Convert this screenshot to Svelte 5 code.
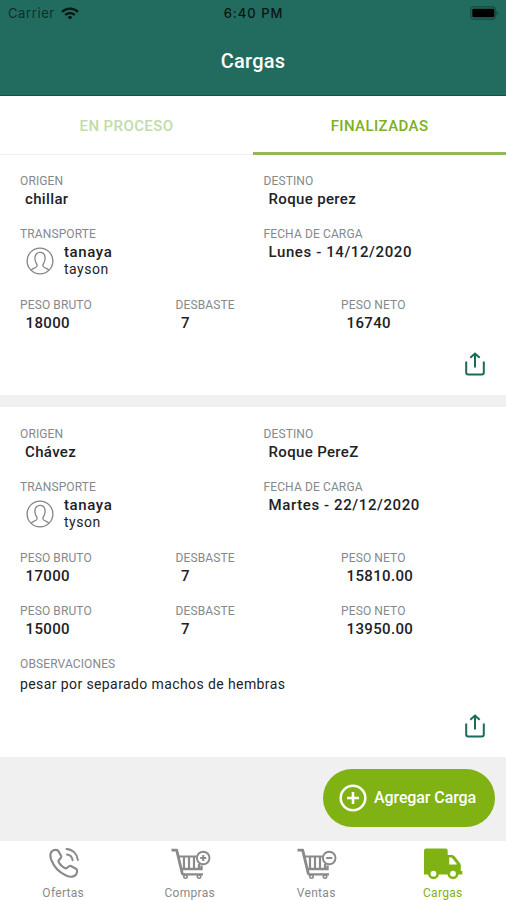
<!--
  App.svelte - "Cargas" screen

  Lists the finished loads with origin, destination, carrier and weights,
  plus the bottom navigation and the add button.
-->
<script lang="ts">
  interface Weight {
    gross: string;
    shrink: string;
    net: string;
  }

  interface Load {
    origin: string;
    destination: string;
    driver: string;
    company: string;
    date: string;
    weights: Weight[];
    notes?: string;
  }

  const loads: Load[] = [
    {
      origin: 'chillar',
      destination: 'Roque perez',
      driver: 'tanaya',
      company: 'tayson',
      date: 'Lunes - 14/12/2020',
      weights: [{ gross: '18000', shrink: '7', net: '16740' }],
    },
    {
      origin: 'Chávez',
      destination: 'Roque PereZ',
      driver: 'tanaya',
      company: 'tyson',
      date: 'Martes - 22/12/2020',
      weights: [
        { gross: '17000', shrink: '7', net: '15810.00' },
        { gross: '15000', shrink: '7', net: '13950.00' },
      ],
      notes: 'pesar por separado machos de hembras',
    },
  ];

  const tabs = ['EN PROCESO', 'FINALIZADAS'];
  const navItems = ['Ofertas', 'Compras', 'Ventas', 'Cargas'];

  let activeTab = $state('FINALIZADAS');
  let activeNav = $state('Cargas');
</script>

{#snippet field(label: string, value: string)}
  <div class="field">
    <div class="label">{label}</div>
    <div class="value">{value}</div>
  </div>
{/snippet}

{#snippet cart(plus: boolean)}
  <svg width="42" height="34" viewBox="-1 0 42 34" fill="none" stroke="currentColor">
    <path d="M1.5 3.2h5.2l5.8 24.3" stroke-width="2.8" stroke-linejoin="round" />
    <path d="M8.5 9.5h18M12 27.3H33" stroke-width="2.2" />
    <path d="M14 10v11M19 10v11M24 10v11M29 17v5" stroke-width="2.2" />
    <path d="M11.5 22H31.5V18.5" stroke-width="2.4" />
    <circle cx="15.5" cy="29.6" r="1.7" stroke-width="1.6" />
    <circle cx="29" cy="29.6" r="1.7" stroke-width="1.6" />
    <circle cx="33.2" cy="11" r="6.3" fill="#fff" stroke-width="1.9" />
    <path d="M30.2 11h6" stroke-width="2" />
    {#if plus}
      <path d="M33.2 8v6" stroke-width="2" />
    {/if}
  </svg>
{/snippet}

<div class="screen">
  <header>
    <div class="status">
      <div class="carrier">
        <span>Carrier</span>
        <svg width="18" height="13" viewBox="0 0 18 13" fill="none" stroke="#071713">
          <path d="M1 4.8a11.6 11.6 0 0 1 16 0" stroke-width="2.3" />
          <path d="M4.2 8a7 7 0 0 1 9.6 0" stroke-width="2.1" />
          <path d="M9 12.6 6.6 10.2a3.5 3.5 0 0 1 4.8 0z" fill="#071713" stroke="none" />
        </svg>
      </div>
      <span class="time">6:40 PM</span>
      <svg class="battery" width="29" height="14" viewBox="0 0 29 14">
        <rect x="0.7" y="0.7" width="24.6" height="12.6" rx="3.4" fill="none" stroke="#184f44" stroke-width="1.4" />
        <rect x="2.3" y="2.7" width="22" height="8.6" rx="1.4" fill="#000" />
        <path d="M26.4 4.4c2 .7 2 4.5 0 5.2z" fill="#184f44" />
      </svg>
    </div>
    <h1>Cargas</h1>
  </header>

  <div class="tabs">
    {#each tabs as tab}
      <button class="tab" class:active={activeTab === tab} onclick={() => (activeTab = tab)}>
        {tab}
      </button>
    {/each}
  </div>

  <main>
    {#each loads as load}
      <article>
        <div class="row halves">
          {@render field('ORIGEN', load.origin)}
          {@render field('DESTINO', load.destination)}
        </div>

        <div class="row halves transport">
          <div class="field">
            <div class="label">TRANSPORTE</div>
            <div class="carrier-info">
              <svg width="28" height="28" viewBox="0 0 28 28" fill="none" stroke="#858585" stroke-width="1.3">
                <circle cx="14" cy="14" r="12.9" />
                <path d="M5.2 23.2c1.3-2 5.8-2.3 6-4.5.1-1.5-2.3-3.3-2.3-7.3C8.9 7.6 11 5.4 14 5.4s5.1 2.2 5.1 6c0 4-2.4 5.8-2.3 7.3.2 2.2 4.7 2.5 6 4.5" />
              </svg>
              <div>
                <div class="driver">{load.driver}</div>
                <div class="company">{load.company}</div>
              </div>
            </div>
          </div>
          {@render field('FECHA DE CARGA', load.date)}
        </div>

        {#each load.weights as weight}
          <div class="row thirds">
            {@render field('PESO BRUTO', weight.gross)}
            {@render field('DESBASTE', weight.shrink)}
            {@render field('PESO NETO', weight.net)}
          </div>
        {/each}

        {#if load.notes}
          <div class="row">
            <div class="field">
              <div class="label">OBSERVACIONES</div>
              <p>{load.notes}</p>
            </div>
          </div>
        {/if}

        <button class="share" aria-label="Compartir">
          <svg width="20" height="24" viewBox="0 0 20 24" fill="none" stroke="#1c6b5a" stroke-width="2">
            <path d="M1.2 9.5V20.5a2 2 0 0 0 2 2H16.8a2 2 0 0 0 2-2V9.5" />
            <path d="M10 15.5V2M5.3 5.8 10 1.5l4.7 4.3" />
          </svg>
        </button>
      </article>
    {/each}

    <div class="actions">
      <button class="add">
        <svg width="28" height="28" viewBox="0 0 28 28" fill="none" stroke="#fff" stroke-width="2.5">
          <circle cx="14" cy="14" r="12.3" />
          <path d="M14 8v12M8 14h12" stroke-width="2.6" />
        </svg>
        <span>Agregar Carga</span>
      </button>
    </div>
  </main>

  <nav>
    {#each navItems as item}
      <button class="nav-item" class:active={activeNav === item} onclick={() => (activeNav = item)}>
        {#if item === 'Ofertas'}
          <svg width="42" height="34" viewBox="-1.5 0 42 34" fill="none" stroke="currentColor" stroke-width="2.2" stroke-linecap="round" stroke-linejoin="round">
            <path d="M8.5 4.2c1.8-1.6 5.2-1.7 6.3-.3l3 5.3c.8 1.7-3 3.3-2.8 5 .5 2.6 4.5 6.6 7.2 7.2 1.7.3 3-3 4.7-2.6l6 3.2c1.5 1.2.6 5-1.2 6.4-2.3 1.8-6 1.5-9.2 0C15.7 25.3 10 19 7.7 12.6c-1-3.2-1.2-6.7.8-8.4z" />
            <path d="M23 2c6.3.4 10.8 5 11.4 11M23.5 7.5c3.2.4 5.2 2.6 5.6 5.7" stroke-width="2" />
          </svg>
        {:else if item === 'Cargas'}
          <svg width="42" height="34" viewBox="0 0 42 34">
            <path d="M4.5 1.5H23.5a2.2 2.2 0 0 1 2.2 2.2V8h3.8c1.3 0 2.5.6 3.3 1.5l5.2 6.8c.6.7.8 1.5.8 2.3V24h1.5v3.5H2V3.7a2.3 2.3 0 0 1 2.5-2.2z" fill="currentColor" />
            <path d="M27.2 10.5h2.5l5 6.3v.7h-7.5z" fill="#fff" />
            <circle cx="11.5" cy="26.7" r="4.2" fill="#fff" stroke="currentColor" stroke-width="2.6" />
            <circle cx="31" cy="26.7" r="4.2" fill="#fff" stroke="currentColor" stroke-width="2.6" />
          </svg>
        {:else}
          {@render cart(item === 'Compras')}
        {/if}
        <span>{item}</span>
      </button>
    {/each}
  </nav>
</div>

<style>
  :global(body) {
    margin: 0;
  }

  .screen {
    width: 506px;
    height: 900px;
    display: flex;
    flex-direction: column;
    overflow: hidden;
    background: #f0f0f0;
    color: #1d2226;
    font-family: Roboto, sans-serif;
  }

  button {
    padding: 0;
    border: 0;
    background: none;
    font-family: inherit;
    cursor: pointer;
  }

  svg {
    display: block;
    flex-shrink: 0;
  }

  header {
    height: 96px;
    box-sizing: border-box;
    flex-shrink: 0;
    border-bottom: 1px solid #0d5546;
    background: #226b5f;
  }

  .status {
    height: 26px;
    display: grid;
    grid-template-columns: 1fr auto 1fr;
    align-items: center;
    padding: 0 7px 0 8px;
    color: #0c3029;
    font-family: Inter, sans-serif;
    font-size: 13px;
    letter-spacing: 0.6px;
  }

  .carrier {
    display: flex;
    align-items: center;
    gap: 6px;
  }

  .time {
    color: #071713;
    font-weight: 500;
    letter-spacing: 1px;
  }

  .battery {
    justify-self: end;
  }

  h1 {
    margin: 0;
    line-height: 70px;
    text-align: center;
    color: #fff;
    font-size: 20px;
    font-weight: 500;
    letter-spacing: 0.2px;
  }

  .tabs {
    height: 59px;
    flex-shrink: 0;
    display: flex;
    background: #fff;
  }

  .tab {
    flex: 1;
    padding-top: 1px;
    border-bottom: 1px solid #f1f1f1;
    color: #bfdcab;
    font-size: 15px;
    font-weight: 500;
    letter-spacing: 0.4px;
  }

  .tab.active {
    border-bottom: 3px solid #91b955;
    padding-top: 3px;
    color: #7eb01b;
  }

  main {
    flex: 1;
    display: flex;
    flex-direction: column;
    gap: 12px;
  }

  article {
    display: flex;
    flex-direction: column;
    gap: 18px;
    padding: 19px 21px 19px 20px;
    background: #fff;
  }

  article + article {
    padding-top: 20px;
  }

  .row {
    display: grid;
  }

  .halves {
    grid-template-columns: 243.5px 1fr;
  }

  .thirds {
    grid-template-columns: 155.5px 165.5px 1fr;
  }

  .label {
    margin-bottom: 2px;
    color: #84898c;
    font-size: 12px;
    line-height: 14px;
    letter-spacing: 0.12px;
  }

  .value,
  .driver {
    font-size: 15px;
    font-weight: 500;
    letter-spacing: 0.35px;
  }

  .value {
    padding-left: 5px;
    line-height: 19px;
  }

  .transport .value {
    letter-spacing: 0.6px;
  }

  .thirds .value {
    padding-left: 5.5px;
  }

  .carrier-info {
    display: flex;
    align-items: center;
    gap: 10px;
    padding: 0 0 2px 6px;
  }

  .driver {
    line-height: 18px;
    letter-spacing: 0.6px;
  }

  .company {
    font-size: 14px;
    line-height: 17px;
    letter-spacing: 0.5px;
  }

  p {
    margin: 3px 0 1px;
    font-size: 14px;
    line-height: 20px;
    letter-spacing: 0.4px;
  }

  .share {
    align-self: flex-end;
    margin-top: 1px;
  }

  .actions {
    display: flex;
    justify-content: flex-end;
    padding-right: 11px;
  }

  .add {
    width: 172px;
    height: 58px;
    display: flex;
    align-items: center;
    gap: 7px;
    padding: 0 0 1px 16px;
    border-radius: 29px;
    background: #80b214;
    color: #fff;
    font-size: 16px;
    font-weight: 500;
    letter-spacing: -0.1px;
  }

  nav {
    height: 59px;
    flex-shrink: 0;
    display: flex;
    background: #fff;
  }

  .nav-item {
    flex: 1;
    display: flex;
    flex-direction: column;
    align-items: center;
    padding-top: 6px;
    color: #8a8a8a;
    font-size: 12px;
    line-height: 24px;
    letter-spacing: 0.3px;
  }

  .nav-item.active {
    color: #80b214;
  }
</style>
